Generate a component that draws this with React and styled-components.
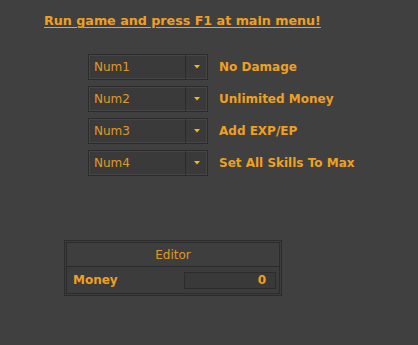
import React from "react";
import styled, {createGlobalStyle} from "styled-components";

const GlobalStyle = createGlobalStyle`
  html, body {
    margin: 0;
    padding: 0;
    background: #404040;
  }
  body {
    font-family: "DejaVu Sans", Verdana, sans-serif;
    color: #f0a020;
  }
`

const Page = styled.div`
  width: 418px;
  height: 345px;
  background: #404040;
  overflow: hidden;
`

const Title = styled.div`
  padding: 13px 0 0 44px;
  height: 21px;
  font-size: 12.7px;
  font-weight: bold;
  text-decoration: underline;
  text-underline-offset: 2px;
  color: #f0a020;
`

const HotkeyList = styled.div`
  display: flex;
  flex-direction: column;
  gap: 6px;
  margin: 20px 0 0 88px;
`

const HotkeyRow = styled.div`
  display: flex;
  align-items: center;
  gap: 11px;
`

const Combo = styled.div`
  display: flex;
  width: 120px;
  height: 26px;
  box-sizing: border-box;
  border: 1px solid #2c2c2c;
  background: #3a3a3a;
  box-shadow: inset 0 0 0 1px #464646;
`

const ComboText = styled.div`
  flex: 1;
  display: flex;
  align-items: center;
  padding-left: 5px;
  font-size: 12px;
  color: #e09a20;
`

const ComboButton = styled.div`
  width: 21px;
  display: flex;
  align-items: center;
  justify-content: center;
  border-left: 1px solid #2c2c2c;
`

const Label = styled.div`
  font-size: 12px;
  font-weight: bold;
  color: #f0a020;
`

const Editor = styled.div`
  margin: 64px 0 0 64px;
  width: 218px;
  box-sizing: border-box;
  border: 1px solid #2c2c2c;
  padding: 1px;
  background: #3c3c3c;
`

const EditorInner = styled.div`
  border: 1px solid #2c2c2c;
`

const EditorHeader = styled.div`
  height: 24px;
  padding-top: 1px;
  box-sizing: border-box;
  display: flex;
  align-items: center;
  justify-content: center;
  font-size: 12px;
  color: #e09a20;
  border-bottom: 1px solid #2a2a2a;
  background: #3e3e3e;
`

const EditorRow = styled.div`
  height: 26px;
  display: flex;
  align-items: center;
  justify-content: space-between;
  padding: 0 3px 0 6px;
`

const FieldName = styled.div`
  font-size: 12px;
  font-weight: bold;
  color: #f0a020;
`

const ValueBox = styled.div`
  width: 92px;
  height: 17px;
  box-sizing: border-box;
  border: 1px solid #2c2c2c;
  background: #393939;
  display: flex;
  align-items: center;
  justify-content: flex-end;
  padding-right: 9px;
  font-size: 12px;
  font-weight: bold;
  color: #f0a020;
`

const Arrow = () => (
    <svg width="6" height="4" viewBox="0 0 6 4">
        <path d="M0 0 H6 L3 3.5 Z" fill="#f0c000"/>
    </svg>
)

const hotkeys = [
    {key: 'Num1', label: 'No Damage'},
    {key: 'Num2', label: 'Unlimited Money'},
    {key: 'Num3', label: 'Add EXP/EP'},
    {key: 'Num4', label: 'Set All Skills To Max'},
]

export default function App() {
    return (
        <Page>
            <GlobalStyle/>
            <Title>Run game and press F1 at main menu!</Title>
            <HotkeyList>
                {hotkeys.map(it => (
                    <HotkeyRow key={it.key}>
                        <Combo>
                            <ComboText>{it.key}</ComboText>
                            <ComboButton><Arrow/></ComboButton>
                        </Combo>
                        <Label>{it.label}</Label>
                    </HotkeyRow>
                ))}
            </HotkeyList>
            <Editor>
                <EditorInner>
                    <EditorHeader>Editor</EditorHeader>
                    <EditorRow>
                        <FieldName>Money</FieldName>
                        <ValueBox>0</ValueBox>
                    </EditorRow>
                </EditorInner>
            </Editor>
        </Page>
    )
}
